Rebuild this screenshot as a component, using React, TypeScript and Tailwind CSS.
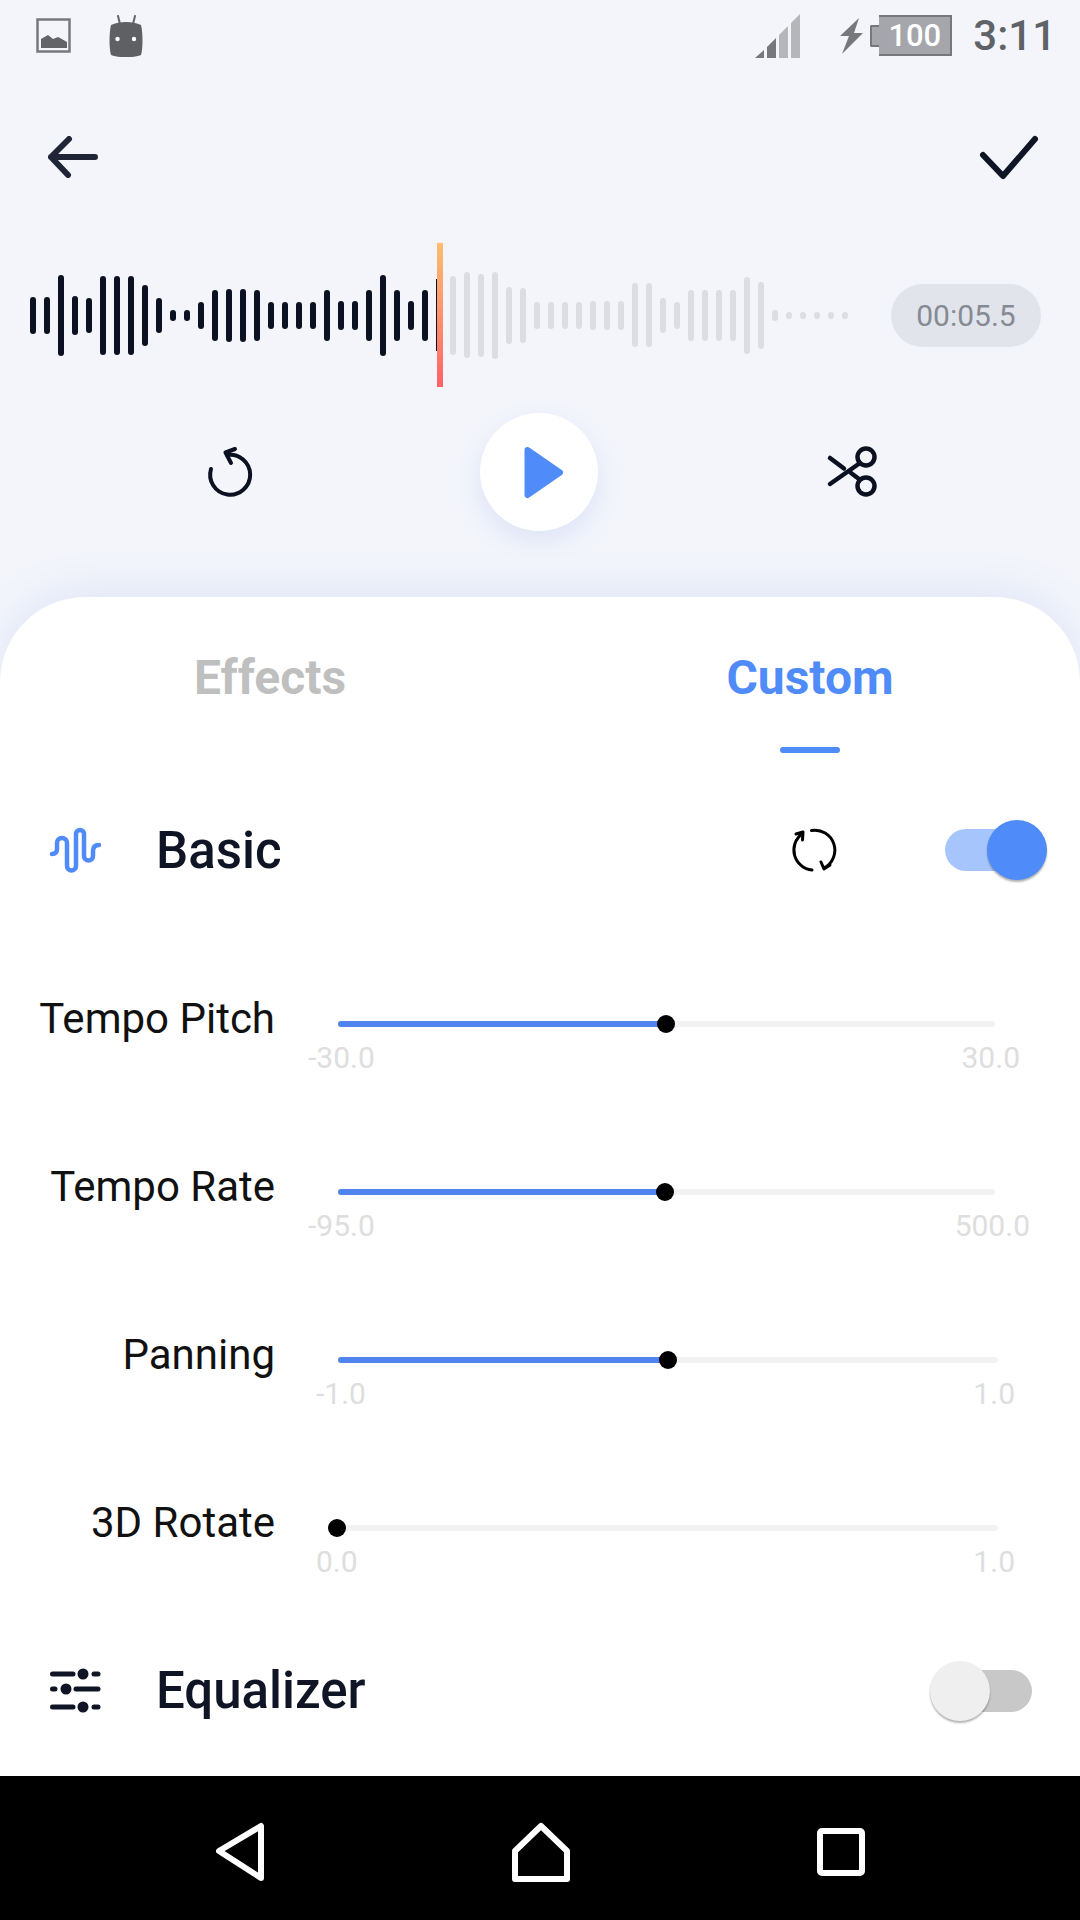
const playedBars = [37, 37, 81, 39, 35, 79, 79, 79, 61, 35, 11, 11, 27, 51, 53, 53, 51, 27, 27, 27, 27, 51, 29, 29, 51, 81, 51, 29, 51];
const restBars = [79, 86, 83, 87, 57, 55, 27, 27, 27, 27, 29, 29, 29, 64, 64, 35, 27, 51, 51, 51, 51, 77, 67, 11, 7, 7, 7, 7, 7];

const sliders = [
  { label: 'Tempo Pitch', min: '-30.0', max: '30.0', track: 'w-[657px]', fill: 'w-[328px]', knob: 'left-[319px]', scale: 'ml-[-30px] w-[712px]' },
  { label: 'Tempo Rate', min: '-95.0', max: '500.0', track: 'w-[657px]', fill: 'w-[327px]', knob: 'left-[318px]', scale: 'ml-[-30px] w-[722px]' },
  { label: 'Panning', min: '-1.0', max: '1.0', track: 'w-[660px]', fill: 'w-[330px]', knob: 'left-[321px]', scale: 'ml-[-22px] w-[699px]' },
  { label: '3D Rotate', min: '0.0', max: '1.0', track: 'w-[660px]', fill: 'w-0', knob: 'left-[-10px]', scale: 'ml-[-22px] w-[699px]' },
];

const StatusBar = () => (
  <div className="flex h-[71px] items-center pl-[36px] pr-[24px]">
    <svg className="h-[36px] w-[36px]" viewBox="0 0 36 36">
      <rect x="1.5" y="1.5" width="32" height="32" fill="none" stroke="#77787c" strokeWidth="2.5" />
      <path d="M5 30V21L12 17L17 21L22 19L24 20L31 24V30Z" fill="#636468" />
    </svg>
    <svg className="ml-[36px] h-[42px] w-[36px]" viewBox="0 0 36 42">
      <path d="M10 1L12 9M27 1L25 9" stroke="#636468" strokeWidth="2" strokeLinecap="round" />
      <path d="M3 10C11 6 25 6 33 10C35 18 35 33 33 40C25 43 11 43 3 40C1 33 1 18 3 10Z" fill="#5f6064" />
      <circle cx="9.5" cy="24" r="2.2" fill="#ffffff" />
      <circle cx="26" cy="24" r="2.2" fill="#ffffff" />
    </svg>
    <svg className="ml-auto h-[44px] w-[45px]" viewBox="0 0 45 44">
      <polygon points="0,44 9,36 9,44" fill="#77787d" />
      <polygon points="12,33 21,24 21,44 12,44" fill="#77787d" />
      <polygon points="24,21 33,12 33,44 24,44" fill="#b5b6ba" />
      <polygon points="36,9 45,0 45,44 36,44" fill="#b5b6ba" />
    </svg>
    <svg className="ml-[40px] h-[36px] w-[23px]" viewBox="0 0 23 36">
      <polygon points="19,0 0,18 9,18 2,36 23,15 14,15" fill="#77787c" />
    </svg>
    <div className="ml-[7px] flex items-center">
      <div className="h-[22px] w-[9px] rounded-l-[2px] border-y-2 border-l-2 border-[#77787c] bg-[#a5a6ab]" />
      <div className="flex h-[41px] w-[73px] items-center justify-center border-2 border-l-0 border-[#77787c] bg-[#a5a6ab] text-[31px] font-medium leading-none text-white">
        100
      </div>
    </div>
    <div className="ml-[21px] text-[42px] font-medium leading-none text-[#5f6368]">3:11</div>
  </div>
);

const Toolbar = () => (
  <div className="flex h-[172px] items-center justify-between pl-[48px] pr-[40px]">
    <svg className="h-[42px] w-[52px]" viewBox="0 0 52 42" fill="none" stroke="#1f2536" strokeWidth="6" strokeLinecap="round" strokeLinejoin="round">
      <path d="M21 3L3 21L20 39M3 21H47" />
    </svg>
    <svg className="h-[46px] w-[62px]" viewBox="0 0 62 46" fill="none" stroke="#0f1525" strokeWidth="6" strokeLinecap="round" strokeLinejoin="round">
      <path d="M5 21L25 42L57 5" />
    </svg>
  </div>
);

const Waveform = () => (
  <div className="flex h-[144px] items-center pl-[30px] pr-[39px]">
    <div className="flex items-center gap-[8px]">
      {playedBars.map((h, i) => (
        <div key={i} className="w-[6px] rounded-full bg-[#0b1120]" style={{ height: h }} />
      ))}
      <div className="h-[72px] w-[1px] bg-[#0b1120]" />
    </div>
    <div className="h-[144px] w-[6px] bg-gradient-to-b from-[#ffbd6e] to-[#ff6068]" />
    <div className="ml-[7px] flex items-center gap-[8px]">
      {restBars.map((h, i) => (
        <div key={i} className="w-[6px] rounded-full bg-[#dcdde2]" style={{ height: h }} />
      ))}
    </div>
    <div className="ml-auto flex h-[63px] w-[150px] items-center justify-center rounded-full bg-[#e2e4eb] text-[30px] text-[#868a94]">
      00:05.5
    </div>
  </div>
);

const Controls = () => (
  <div className="mt-[26px] flex items-center pl-[205px]">
    <svg className="h-[54px] w-[48px]" viewBox="0 0 48 54" fill="none" stroke="#0b1120" strokeWidth="4" strokeLinecap="round" strokeLinejoin="round">
      <path d="M6 24A20 20 0 1 0 22 10" />
      <path d="M30 4L20.5 7.5L26 18" />
    </svg>
    <div className="ml-[227px] flex h-[118px] w-[118px] items-center justify-center rounded-full bg-white shadow-[0_10px_24px_rgba(90,130,230,0.14)]">
      <svg className="ml-[9px] h-[53px] w-[40px]" viewBox="0 0 40 53">
        <polygon points="3.5,4 36,26.5 3.5,49" fill="#4f8bf9" stroke="#4f8bf9" strokeWidth="6" strokeLinejoin="round" />
      </svg>
    </div>
    <svg className="ml-[228px] h-[56px] w-[52px]" viewBox="0 0 52 56" fill="none" stroke="#0b1120" strokeWidth="4.5" strokeLinecap="round">
      <circle cx="40" cy="13" r="8.5" />
      <circle cx="40" cy="42" r="8.5" />
      <path d="M4 40L34 19M4 14L18 24.5M25 29L33 35" />
    </svg>
  </div>
);

const Toggle = ({ on }: { on: boolean }) => (
  <div className="relative flex h-[60px] w-[102px] items-center">
    {on ? (
      <>
        <div className="h-[42px] w-[90px] rounded-full bg-[#a6c5fc]" />
        <div className="absolute right-0 top-0 h-[60px] w-[60px] rounded-full bg-[#4f8bf9] shadow-[0_2px_2px_rgba(0,0,0,0.3)]" />
      </>
    ) : (
      <>
        <div className="ml-auto h-[42px] w-[90px] rounded-full bg-[#c8c8c8]" />
        <div className="absolute left-0 top-0 h-[60px] w-[60px] rounded-full bg-[#efefef] shadow-[0_2px_2px_rgba(0,0,0,0.3)]" />
      </>
    )}
  </div>
);

const Slider = ({ s }: { s: (typeof sliders)[number] }) => (
  <div className="flex h-[168px]">
    <div className="mt-[54px] w-[275px] text-right text-[42px] leading-[48px] text-[#111111]">{s.label}</div>
    <div className="ml-[63px] pt-[80px]">
      <div className={`relative h-[6px] rounded-full bg-[#f2f2f4] ${s.track}`}>
        <div className={`h-[6px] rounded-full bg-[#4f84ef] ${s.fill}`} />
        <div className={`absolute top-[-6px] h-[18px] w-[18px] rounded-full bg-black ${s.knob}`} />
      </div>
      <div className={`mt-[13px] flex justify-between text-[30px] leading-[36px] text-[#dedede] ${s.scale}`}>
        <span>{s.min}</span>
        <span>{s.max}</span>
      </div>
    </div>
  </div>
);

const Sheet = () => (
  <div className="flex-1 rounded-t-[85px] bg-white shadow-[0_-8px_40px_rgba(100,130,220,0.12)]">
    <div className="grid grid-cols-2 pt-[53px]">
      <div className="text-center text-[48px] font-bold leading-[56px] text-[#bfbfbf]">Effects</div>
      <div className="flex flex-col items-center">
        <div className="text-[48px] font-bold leading-[56px] text-[#4f8bf9]">Custom</div>
        <div className="mt-[41px] h-[6px] w-[60px] rounded-full bg-[#4f8bf9]" />
      </div>
    </div>

    {/* Basic */}
    <div className="mt-[67px] flex h-[60px] items-center pl-[48px] pr-[33px]">
      <svg className="h-[52px] w-[56px]" viewBox="0 0 56 52" fill="none" stroke="#4f8bf9" strokeWidth="4.5" strokeLinecap="round">
        <path d="M4 30C7 30 9 29 9 25V19A5 5 0 0 1 19 19V42A4.5 4.5 0 0 0 28 42V10A4 4 0 0 1 36 10V32A4.5 4.5 0 0 0 45 32V27C45 23 47 21 51 21" />
      </svg>
      <div className="ml-[52px] pt-[2px] text-[51px] font-medium leading-[56px] text-[#0f1525]">Basic</div>
      <svg className="ml-auto h-[50px] w-[50px]" viewBox="0 0 50 50" fill="none" stroke="#000000" strokeWidth="3" strokeLinecap="round" strokeLinejoin="round">
        <path d="M25 45A20 20 0 0 1 15 9M9 9L16 7L15.5 15" />
        <path d="M24.5 5.5A20 20 0 0 1 37 43M34 37L37 44L43 40" />
      </svg>
      <div className="ml-[108px]">
        <Toggle on />
      </div>
    </div>

    <div className="mt-[61px]">
      {sliders.map((s) => (
        <Slider key={s.label} s={s} />
      ))}
    </div>

    {/* Equalizer */}
    <div className="mt-[48px] flex h-[60px] items-center pl-[48px] pr-[48px]">
      <svg className="h-[50px] w-[56px]" viewBox="0 0 56 50" fill="none" stroke="#0f1525" strokeWidth="5" strokeLinecap="round">
        <path d="M4.5 8H25M46 8H50M4.5 23H7M28 23H50M4.5 41H25M46 41H50" />
        <circle cx="35" cy="8" r="5.5" fill="#0f1525" stroke="none" />
        <circle cx="18" cy="23" r="5.5" fill="#0f1525" stroke="none" />
        <circle cx="35" cy="41" r="5.5" fill="#0f1525" stroke="none" />
      </svg>
      <div className="ml-[52px] text-[51px] font-medium leading-[56px] text-[#0f1525]">Equalizer</div>
      <div className="ml-auto">
        <Toggle on={false} />
      </div>
    </div>
  </div>
);

const NavBar = () => (
  <div className="flex h-[144px] items-center justify-center gap-[247px] bg-black pt-[8px]">
    <svg className="h-[60px] w-[49px]" viewBox="0 0 49 60" fill="none" stroke="#ffffff" strokeWidth="6" strokeLinejoin="round">
      <path d="M45 4V56L3 29Z" />
    </svg>
    <svg className="h-[60px] w-[58px]" viewBox="0 0 58 60" fill="none" stroke="#ffffff" strokeWidth="6" strokeLinejoin="round">
      <path d="M29 4L55 29V57H3V29Z" />
    </svg>
    <svg className="h-[48px] w-[48px]" viewBox="0 0 48 48" fill="none" stroke="#ffffff" strokeWidth="6" strokeLinejoin="round">
      <rect x="3" y="3" width="42" height="42" rx="2" />
    </svg>
  </div>
);

export default function App() {
  return (
    <div className="flex h-[1920px] w-[1080px] flex-col overflow-hidden bg-[#f3f5fb] font-['Roboto',sans-serif]">
      <StatusBar />
      <Toolbar />
      <Waveform />
      <Controls />
      <div className="h-[66px]" />
      <Sheet />
      <NavBar />
    </div>
  );
}
